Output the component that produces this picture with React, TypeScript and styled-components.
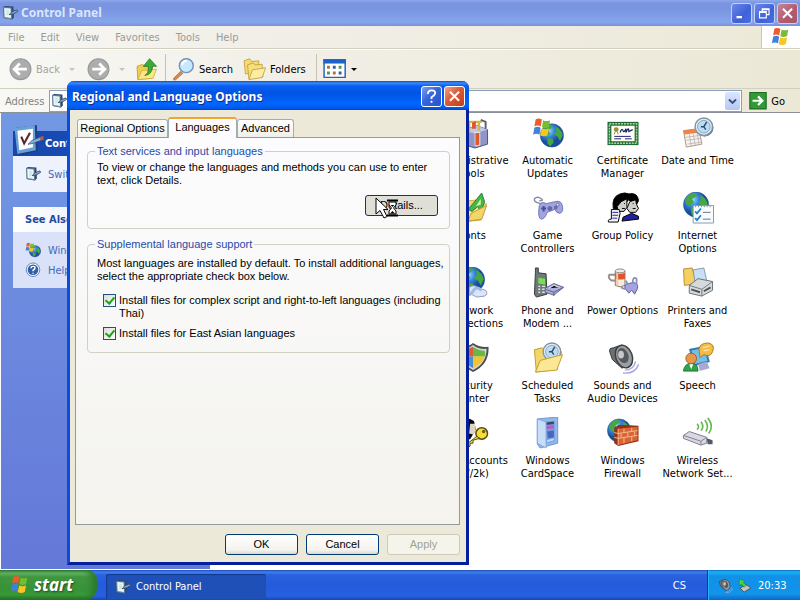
import React from 'react';
import styled, { createGlobalStyle, css } from 'styled-components';

const uiFont = '"DejaVu Sans Condensed", "DejaVu Sans", sans-serif';
const dialogFont = '"Liberation Sans", Arial, sans-serif';
const titleFont = '"Noto Sans", "Open Sans", sans-serif';

const GlobalStyle = createGlobalStyle`
  * { box-sizing: border-box; }
  body { margin: 0; overflow: hidden; }
  button, input { font: inherit; color: inherit; margin: 0; }
  button { background: none; border: 0; padding: 0; }
  svg { display: block; flex: none; }
`;

const Desktop = styled.div`
  position: relative;
  display: flex;
  flex-direction: column;
  height: 100vh;
  font: 11px/13px ${uiFont};
  color: #000;
  background: #fff;
`;

const Explorer = styled.main`
  flex: 1;
  min-height: 0;
  display: flex;
  flex-direction: column;
`;

const TitleBar = styled.header`
  display: flex;
  align-items: center;
  height: 26px;
  padding: 0 2px 0 2px;
  gap: 3px;
  background: linear-gradient(#8ea9ec 0, #7b95e0 3px, #7a94e0 9px, #809fe8 17px, #86a5ea 22px, #7890dd 26px);
`;

const WindowTitle = styled.h1`
  flex: 1;
  margin: 0;
  font: bold 12px/18px ${titleFont};
  color: #dbe5fb;
`;

const CaptionButton = styled.button<{ $kind: 'blue' | 'red' | 'activeBlue' | 'activeRed' }>`
  display: flex;
  align-items: center;
  justify-content: center;
  width: 21px;
  height: 21px;
  border: 1px solid ${p => (p.$kind.startsWith('active') ? '#fff' : '#c3d0f5')};
  border-radius: 3px;
  background: ${p =>
    ({
      blue: 'linear-gradient(135deg, #6c88e6, #3f61d8 60%, #4a70e0)',
      red: 'linear-gradient(135deg, #c58598, #b05a6c 60%, #a9566c)',
      activeBlue: 'linear-gradient(135deg, #7b9df4, #3765dc 45%, #2453d0)',
      activeRed: 'linear-gradient(135deg, #f0a48c, #dd5a38 45%, #c33c16)',
    })[p.$kind]};
`;

const CaptionGroup = styled.div`
  display: flex;
  gap: 2px;
`;

const MenuBar = styled.nav`
  display: flex;
  height: 23px;
  background: linear-gradient(90deg, #f7f7f4, #f1efe8 30%, #ece9d8);
  border-bottom: 1px solid #d2cfc0;
  color: #9b9b98;
`;

const MenuItem = styled.button`
  padding: 0 8px;
`;

const FlagBox = styled.div`
  display: flex;
  align-items: center;
  justify-content: center;
  width: 39px;
  margin-left: auto;
  background: #fff;
  border-left: 1px solid #c9c6b8;
`;

const ToolBar = styled.div`
  display: flex;
  align-items: center;
  height: 40px;
  padding-left: 9px;
  background: linear-gradient(90deg, #f8f8f5, #f1efe7 35%, #ece8d6);
  border-top: 1px solid #fff;
  border-bottom: 1px solid #d2cfc0;
`;

const ToolButton = styled.button<{ $width: number }>`
  display: flex;
  align-items: center;
  gap: 4px;
  width: ${p => p.$width}px;
  &:disabled { color: #a5a4a0; }
`;

const ToolSeparator = styled.span`
  width: 1px;
  height: 30px;
  margin-right: 6px;
  background: #c6c3b3;
`;

const DropArrow = styled.span<{ $dim?: boolean }>`
  margin-left: ${p => (p.$dim ? 5 : 0)}px;
  border: 3px solid transparent;
  border-top-color: ${p => (p.$dim ? '#c5c4bd' : '#000')};
  border-bottom: 0;
`;

const AddressBar = styled.form`
  display: flex;
  align-items: center;
  height: 23px;
  padding: 1px 15px 0 5px;
  background: linear-gradient(90deg, #f8f8f5, #f1efe7 35%, #ece8d6);
`;

const AddressLabel = styled.label`
  width: 44px;
  color: #83837f;
`;

const AddressField = styled.div`
  flex: 1;
  display: flex;
  align-items: center;
  height: 22px;
  padding: 0 1px;
  border: 1px solid #8ba0b8;
  background: #fff;
`;

const AddressInput = styled.input`
  flex: 1;
  min-width: 0;
  padding: 0 4px;
  border: 0;
  outline: 0;
  background: none;
`;

const ComboButton = styled.button`
  display: flex;
  align-items: center;
  justify-content: center;
  width: 15px;
  height: 18px;
  border-radius: 2px;
  background: linear-gradient(#dbe6fd, #b4c8f6);
`;

const GoButton = styled.button`
  display: flex;
  align-items: center;
  gap: 4px;
  margin-left: 7px;
`;

const Content = styled.div`
  flex: 1;
  min-height: 0;
  display: flex;
  padding: 0 0 1px 1px;
  border-top: 1px solid #8b8f98;
`;

const Sidebar = styled.aside`
  display: flex;
  flex-direction: column;
  flex: none;
  gap: 15px;
  width: 209px;
  padding: 18px 12px;
  background: linear-gradient(#7298e4, #6478d8);
`;

const TaskPanel = styled.section<{ $tone: string }>`
  background: ${p => p.$tone};
  color: #3c5fbc;
`;

const TaskHeading = styled.h2<{ $primary?: boolean }>`
  display: flex;
  align-items: flex-end;
  height: 25px;
  margin: 0;
  padding-left: ${p => (p.$primary ? 0 : 12)}px;
  font: bold 11px/24px ${uiFont};
  ${p =>
    p.$primary
      ? css`color: #fff; background: linear-gradient(90deg, #1446ac, #2456c2);`
      : css`color: #24489c; background: linear-gradient(90deg, #fff, #d0dbf7);`}
`;

const TaskLinks = styled.div`
  display: flex;
  flex-direction: column;
  gap: 4px;
  padding: 10px 12px;
`;

const TaskLink = styled.a`
  display: flex;
  align-items: center;
  gap: 7px;
  color: #4568bc;
  text-decoration: none;
`;

const IconGrid = styled.div`
  flex: 1;
  display: grid;
  grid-template-columns: repeat(7, 75px);
  grid-auto-rows: 75px;
  padding-top: 4px;
`;

const Applet = styled.button`
  display: flex;
  flex-direction: column;
  align-items: center;
  gap: 5px;
  &:nth-child(4n + 1) { grid-column-start: 4; }
`;

const AppletName = styled.span`
  white-space: pre;
  text-align: center;
`;

const Dialog = styled.section`
  position: absolute;
  left: 67px;
  top: 81px;
  width: 402px;
  border: 3px solid #0a33c4;
  border-color: #0a4be0 #041f9c #041f9c #0a4be0;
  border-top: 0;
  border-radius: 7px 7px 0 0;
  background: #ece9d8;
  font: 11px/13px ${dialogFont};
`;

const DialogTitleBar = styled.header`
  display: flex;
  align-items: center;
  height: 29px;
  margin: 0 -3px;
  padding: 2px 4px 0 5px;
  border-radius: 7px 7px 0 0;
  background: linear-gradient(#0a48c8 0, #3b8bf8 2px, #0a5df0 5px, #0054e4 12px, #0066ff 23px, #0058ec 27px, #0043cc 29px);
`;

const DialogTitle = styled.h2`
  flex: 1;
  margin: 0;
  font: bold 12px/18px ${titleFont};
  color: #fff;
  text-shadow: 1px 1px 0 #0c2f90;
`;

const DialogBody = styled.div`
  padding: 7px 6px 7px 5px;
`;

const Tabs = styled.div`
  display: flex;
  align-items: flex-end;
  height: 20px;
  padding-left: 2px;
`;

const Tab = styled.button<{ $width: number; $active?: boolean }>`
  width: ${p => p.$width}px;
  height: 18px;
  border: 1px solid #a3adb0;
  border-bottom: 0;
  border-radius: 3px 3px 0 0;
  background: linear-gradient(#fff, #f0f0ea);
  white-space: nowrap;
  ${p =>
    p.$active &&
    css`
      height: 21px;
      margin-bottom: -1px;
      padding-bottom: 3px;
      border-top: 2px solid #f3a62f;
      background: #fcfcfe;
      z-index: 1;
    `}
`;

const TabPage = styled.div`
  min-height: 388px;
  padding: 7px 9px 0 11px;
  border: 1px solid #919b9c;
  background: linear-gradient(#fcfcfe, #f4f3ee);
`;

const Group = styled.fieldset`
  min-width: 0;
  margin: 0 0 9px;
  padding: 3px 9px 12px 9px;
  border: 1px solid #d0d0c4;
  border-radius: 4px;
`;

const GroupTitle = styled.legend`
  margin-left: -2px;
  padding: 0 2px;
  color: #1f4ba8;
`;

const Paragraph = styled.p`
  margin: 0;
  white-space: pre;
`;

const LanguageNote = styled(Paragraph)`
  padding: 3px 0 11px;
`;

const CheckRow = styled.label`
  display: flex;
  align-items: flex-start;
  gap: 3px;
  margin: 0 0 7px 6px;
  white-space: pre;
  &:last-child { margin-bottom: 0; }
`;

const CheckBox = styled.input`
  appearance: none;
  flex: none;
  display: flex;
  align-items: center;
  justify-content: center;
  width: 13px;
  height: 13px;
  border: 1px solid #1c5180;
  background: linear-gradient(135deg, #dcdcd7, #fff);
  &:checked::after {
    content: '';
    width: 4px;
    height: 7px;
    margin-bottom: 2px;
    border: solid #21a121;
    border-width: 0 2px 2px 0;
    transform: rotate(40deg);
  }
`;

const ButtonRow = styled.div<{ $gap?: number }>`
  display: flex;
  justify-content: flex-end;
  gap: 8px;
  margin-top: ${p => p.$gap ?? 9}px;
`;

const PushButton = styled.button<{ $pressed?: boolean }>`
  width: 73px;
  height: 21px;
  border: 1px solid #003c74;
  border-radius: 3px;
  background: ${p => (p.$pressed ? '#e0dfd7' : 'linear-gradient(#fff, #f3f2ed 80%, #dcd8cf)')};
  &:disabled {
    color: #a1a192;
    border-color: #cdcabc;
    background: #f5f4ea;
  }
`;

const DetailsRow = styled(ButtonRow)`
  padding-right: 2px;
`;

const BusyPointer = styled.div`
  position: absolute;
  left: 305px;
  top: 116px;
  pointer-events: none;
`;

const TaskBar = styled.footer`
  display: flex;
  align-items: stretch;
  height: 30px;
  background: linear-gradient(#1f49b4 0, #3f7ff0 2px, #2a62dc 5px, #245bdb 14px, #2660e2 26px, #1b46ae 30px);
  color: #fff;
`;

const StartButton = styled.button`
  display: flex;
  align-items: center;
  gap: 4px;
  width: 97px;
  padding: 0 0 1px 10px;
  border-radius: 0 10px 12px 0;
  background: linear-gradient(#2f7a30 0, #6cb96a 3px, #3f963f 7px, #389238 20px, #3a9a3a 25px, #246a25 30px);
  box-shadow: inset -5px 0 6px #2a7a2b;
  font: italic bold 17px/20px ${titleFont};
  color: #fff;
  text-shadow: 1px 1px 2px #1d4b1d;
`;

const TaskButton = styled.button`
  display: flex;
  align-items: center;
  gap: 5px;
  width: 160px;
  margin: 4px 0 1px 9px;
  padding-left: 9px;
  border-radius: 2px;
  background: #1e50b8;
  box-shadow: inset 1px 1px 1px #143a8e;
`;

const LanguageIndicator = styled.button`
  margin-left: auto;
  padding: 0 21px 0 0;
`;

const Tray = styled.div`
  display: flex;
  align-items: center;
  gap: 4px;
  width: 93px;
  padding-left: 10px;
  border-left: 1px solid #0a3a98;
  background: linear-gradient(#0f70cc 0, #1cb0f4 2px, #1290e6 6px, #1194ea 24px, #0d68c8 30px);
  box-shadow: inset 1px 0 0 #22b6f6;
`;

const Clock = styled.time`
  margin-left: 2px;
`;

type ArtProps = { name: string; size?: number };

const Flag = () => (
  <g>
    <path d="M5 3Q9 0 15 3L13 14Q8 11 3 14Z" fill="#ed5a2c" />
    <path d="M17 4Q22 7 28 4L26 15Q20 18 15 15Z" fill="#75bd35" />
    <path d="M3 16Q8 13 13 16L11 27Q6 24 1 27Z" fill="#3e82dc" />
    <path d="M15 17Q20 20 26 17L24 28Q18 31 12 28Z" fill="#f9c522" />
  </g>
);

const Globe = ({ x = 16, y = 16, r = 13 }) => (
  <g>
    <circle cx={x} cy={y} r={r} fill="url(#sea)" stroke="#23558d" strokeWidth=".6" />
    <g transform={`translate(${x} ${y}) scale(${r / 13})`} fill="#47a843">
      <path d="M-11-5Q-7-12-1-12L1-9-4-6-2-2-7 2-10-1ZM-5 3L1 4 2 8-2 12-5 9Z" />
      <path d="M4-10Q11-7 12 0L9 6 6 1 2-1 5-5Z" />
    </g>
  </g>
);

const PanelSheet = () => (
  <g>
    <path d="M2 4L24 1 25 28 5 32Z" fill="#173f7c" />
    <path d="M1 4L22 1 23 27 4 31Z" fill="#6ba0d6" />
    <path d="M4 7L20 5 20 24 6 27Z" fill="#fff" />
    <path d="M8 13L11 20 17 9" stroke="#5d2530" strokeWidth="2.200" fill="none" />
    <path d="M15 21L19 17 29 13 31 16 20 20Z" fill="#7fb0df" stroke="#2a446b" strokeWidth=".7" />
    <path d="M27 14L31 12V16L28 17Z" fill="#c8543d" />
  </g>
);

const PanelSmall = () => (
  <g>
    <path d="M2 4L6 2 23 3 24 26 20 30 3 27Z" fill="#2c4a72" />
    <path d="M2 4L19 5 20 30 3 27Z" fill="#6687aa" />
    <path d="M4 6L17 7 18 27 5 25Z" fill="#eef7f4" />
    <path d="M8 10L14 10 14 20 8 22Z" fill="#cfeae6" />
    <path d="M14 20L20 14 30 10 32 13 24 18Z" fill="#87a5c6" stroke="#263c5a" strokeWidth="1.500" />
  </g>
);

const Gamepad = () => (
  <g stroke="#5960a2" strokeWidth=".8">
    <path d="M9 12Q1 11 2 7Q5 4 9 7Q12 9 7 9" fill="none" stroke="#8989a8" strokeWidth="1.5" />
    <path d="M7 14Q9 9 14 12L23 10Q30 8 31 15Q32 21 28 22Q25 22 23 18L15 21Q13 28 9 28Q5 27 7 14Z" fill="#a2a4e1" />
    <path d="M9 17H14M11.500 14.500V20" stroke="#484e94" strokeWidth="2" />
    <circle cx="26" cy="13" r="1.500" fill="#dedff9" />
    <circle cx="24" cy="16" r="1.500" fill="#696fb7" />
    <circle cx="18" cy="17" r="2" fill="#6369a8" />
  </g>
);

const ClockFace = ({ x = 20, y = 10, r = 9 }) => (
  <g>
    <circle cx={x + 1} cy={y + 1} r={r} fill="#57616b" />
    <circle cx={x} cy={y} r={r} fill="#e4edf4" stroke="#8494a4" strokeWidth="1.5" />
    <circle cx={x} cy={y} r={r - 2.5} fill="#bcdcf3" stroke="#6b9dc4" strokeWidth=".8" />
    <path d={`M${x + 3} ${y - 5}L${x} ${y}H${x - 3}M${x} ${y}L${x + 2} ${y + 3}`} stroke="#314863" strokeWidth="1.4" fill="none" />
  </g>
);

const FolderShape = () => (
  <g stroke="#c59a31" strokeWidth=".8">
    <path d="M2 8L10 6 13 9 23 8 26 28 4 31Z" fill="#f3d66a" />
    <path d="M8 18L31 12 25 29 3 31Z" fill="#fbe895" />
  </g>
);

const Speaker = () => (
  <g>
    <path d="M2 9Q2 6 6 6L15 3 24 22 15 27 5 18Z" fill="#6d7074" stroke="#34373a" />
    <ellipse cx="17" cy="15" rx="8.500" ry="12" transform="rotate(-20 17 15)" fill="#9b9ea1" stroke="#3c3f42" strokeWidth="1.5" />
    <ellipse cx="16" cy="14" rx="5.500" ry="8" transform="rotate(-20 16 14)" fill="#555a5f" />
    <ellipse cx="14" cy="13" rx="3" ry="4" fill="#c6c8ca" />
    <path d="M18 29Q27 29 29 20M16 32Q29 33 32 23" stroke="#aaa9dd" fill="none" strokeWidth="1.5" />
  </g>
);

const art: Record<string, React.ReactNode> = {
  flag: <Flag />,
  panel: <PanelSheet />,
  panelSmall: <PanelSmall />,
  tools: (
    <g>
      <path d="M5 14L20 9 31 13V28L18 32 5 28Z" fill="#8f96c5" stroke="#4d5486" />
      <path d="M5 14L18 17 31 13 20 9Z" fill="#c3c7e6" />
      <path d="M18 17V32" stroke="#5b6298" />
      <path d="M10 5H25M12 5V15M22 4V14" stroke="#d7b344" strokeWidth="2.500" />
      <path d="M15 6L19 4V12H15Z" fill="#dd5536" />
      <path d="M18 16H23V29L18 30Z" fill="#db5830" stroke="#fff" strokeWidth=".8" />
      <path d="M24 3L29 5V12" stroke="#5a5f72" strokeWidth="2" fill="none" />
    </g>
  ),
  updates: (
    <g>
      <Globe x={20} y={19} r={12} />
      <g transform="scale(.65) translate(0 1)"><Flag /></g>
    </g>
  ),
  certificate: (
    <g>
      <path d="M0 5H32V29H0Z" fill="#226b36" />
      <path d="M2 7H30V27H2Z" fill="none" stroke="#a7dca0" strokeWidth="1.500" strokeDasharray="2 1" />
      <path d="M4 9H28V25H4Z" fill="#fffff4" />
      <circle cx="9" cy="13" r="2.500" fill="#9b8d40" />
      <path d="M8 15L7 18M10 15L11 18" stroke="#9b8d40" />
      <path d="M13 16Q15 11 16 14Q17 17 19 12L19 16Q22 9 22 15L26 13" stroke="#171c67" fill="none" strokeWidth="1.200" />
      <path d="M7 20H24M7 22.500H14M18 22.500H25" stroke="#1a1f75" />
    </g>
  ),
  date: (
    <g>
      <path d="M1 14L17 12 20 28 4 31Z" fill="#fbf4ed" stroke="#a5968f" />
      <path d="M1 14L17 12 18 16 2 18Z" fill="#ef8344" />
      <path d="M3 21L18 19M4 24L19 22M5 28L19 26M7 17L9 30M11 17L13 29M15 16L17 28" stroke="#b9adb0" strokeWidth=".8" />
      <ClockFace x={22} y={10} r={9} />
    </g>
  ),
  fonts: (
    <g transform="translate(-1 0)">
      <FolderShape />
      <path d="M12 18L26 1 29 10 25 21 22 15 16 20Z" fill="#45b649" stroke="#2b8134" />
      <path d="M20 15L25 7 25 13Z" fill="#d8f0a4" />
      <path d="M15 22L31 14 26 28 12 30Z" fill="#f3d66a" stroke="#c59a31" />
    </g>
  ),
  game: <Gamepad />,
  group: (
    <g stroke="#000">
      <path d="M6 17Q4 5 13 2Q18 0 22 2Q31 0 32 9L29 15 22 8 13 17Z" fill="#000" />
      <path d="M14 10L20 7 20 16 17 20 11 20 10 15Z" fill="#cfcfcb" />
      <path d="M23 10L29 8 30 13 32 17 29 21 23 21 20 17Z" fill="#cfcfcb" />
      <path d="M16 26L25 22 32 25V28L15 30Z" fill="#20209c" />
      <path d="M4 18H12L13 22 11 31H1Q0 28 4 28Z" fill="#f1f1f3" />
      <path d="M5 21H11M5 24H11M5 27H10" stroke="#272790" />
      <path d="M17 12H18M26 12H27M15 17H18M26 17H29" />
    </g>
  ),
  internet: (
    <g>
      <Globe x={14} y={13} r={13} />
      <path d="M11 14H32V32H11Z" fill="#f9fbff" stroke="#809cb1" />
      <path d="M13 15H31" stroke="#8294a1" strokeWidth="1.500" strokeDasharray="1 2" />
      <path d="M13 20L15 22 19 17M13 27L15 29 19 24" stroke="#227ec4" strokeWidth="1.800" fill="none" />
      <path d="M21 21H29M21 28H29" stroke="#6b7481" />
    </g>
  ),
  network: (
    <g>
      <Globe x={15} y={13} r={13} />
      <path d="M12 21Q18 17 22 22L29 24Q32 28 28 30L20 31 12 27Z" fill="#dbe4f8" stroke="#8c9cba" />
      <path d="M3 28Q13 31 16 25Q19 19 25 24" stroke="#9cbbe6" strokeWidth="3" fill="none" />
    </g>
  ),
  phone: (
    <g>
      <path d="M3 6V1H6V6L14 7 15 28 4 31 2 28Z" fill="#70787a" stroke="#333c40" />
      <path d="M6 11L13 12V18L6 17Z" fill="#78e04d" />
      <path d="M6 20H8M10 20H13M6 23H8M10 23H13M6 26H8M10 26H13" stroke="#e4e8e9" strokeWidth="1.500" />
      <path d="M13 22L22 17 32 21 22 29 13 26Z" fill="#aeafd9" stroke="#5f608e" />
      <path d="M13 23L22 26 32 21M22 26V30" stroke="#5f608e" fill="none" />
      <path d="M17 22L22 19 28 21" stroke="#e7e8fa" />
    </g>
  ),
  power: (
    <g>
      <path d="M10 14L4 14Q0 11 2 8L9 8" stroke="#91918d" strokeWidth="2" fill="none" />
      <path d="M8 4Q13 1 18 4V19Q13 22 8 19Z" fill="#f8ebe4" stroke="#84736c" />
      <path d="M8 6Q13 8 18 6V12Q13 14 8 12Z" fill="#de552d" />
      <path d="M10 6V19" stroke="#f6c79e" strokeWidth="2" />
      <ellipse cx="13" cy="4" rx="5" ry="2" fill="#eee" stroke="#918c87" />
      <path d="M18 22Q17 17 22 17L27 16Q32 17 31 22L28 28 25 24 22 27Z" fill="#a4a3df" stroke="#5e5e9c" />
      <path d="M18 23L14 21M21 18L19 14M26 17Q26 9 30 12L30 18" stroke="#8c8cb5" strokeWidth="1.800" fill="none" />
    </g>
  ),
  printer: (
    <g>
      <path d="M1 2L10 1 14 17 2 19Z" fill="#f5cf63" stroke="#b78f34" />
      <path d="M11 3L22 1 25 14 13 16Z" fill="#c8dff7" stroke="#879ab3" />
      <path d="M7 19L16 12 31 15V24L20 30 7 27Z" fill="#d6dadd" stroke="#6b7074" />
      <path d="M7 19L20 23 31 15M20 23V30" stroke="#72787c" fill="none" />
      <path d="M9 23L18 26M22 25L29 21" stroke="#4e5456" strokeWidth="2" />
    </g>
  ),
  security: (
    <g transform="translate(2 0)">
      <path d="M14 1Q21 6 30 5Q31 23 14 31Q-2 23 0 5Q8 6 14 1Z" fill="#4c5054" />
      <path d="M14 3Q20 8 28 7Q28 22 14 29Q1 22 2 7Q8 8 14 3Z" fill="#d5d9dc" />
      <path d="M14 5V15H4Q3 12 4 8Q9 8 14 5Z" fill="#e05b33" />
      <path d="M14 5Q20 9 26 9Q27 12 26 15H14Z" fill="#68b741" />
      <path d="M4 15H14V27Q5 22 4 15Z" fill="#4b8edb" />
      <path d="M14 15H26Q24 22 14 27Z" fill="#f0c52f" />
    </g>
  ),
  scheduled: (
    <g>
      <path d="M2 8L10 6 13 9 23 8 26 28 4 31Z" fill="#f3d66a" stroke="#c59a31" />
      <ClockFace x={20} y={10} r={9} />
      <path d="M8 19L31 13 25 29 3 31Z" fill="#fbe895" stroke="#c59a31" />
    </g>
  ),
  sounds: <Speaker />,
  speech: (
    <g>
      <path d="M8 8L23 5 27 20 12 24Z" fill="#75bee9" stroke="#397aae" strokeWidth="2" />
      <path d="M16 23L25 20 28 27 18 30Z" fill="#a9a9cf" />
      <path d="M17 7Q18 1 27 1Q34 3 31 10Q29 16 22 13L18 16Z" fill="#f5bd45" stroke="#a97b22" />
      <path d="M21 6L28 4M22 9L28 8" stroke="#fff1bc" />
      <path d="M1 30Q2 22 9 22Q16 22 16 30Z" fill="#31a34a" stroke="#247539" />
      <circle cx="9" cy="17" r="5.500" fill="#e89846" stroke="#9d602c" />
      <path d="M7 23L9 28 11 23Z" fill="#fff" />
    </g>
  ),
  users: (
    <g>
      <path d="M1 5Q8-2 17 4L19 13 13 23H1Z" fill="#050505" />
      <path d="M13 7H18L19 14 16 18 12 17Z" fill="#ddd5be" />
      <circle cx="25" cy="17" r="6" fill="#f5dd38" stroke="#554a0a" strokeWidth="1.500" />
      <path d="M20 20L8 29 10 32 13 30V27H16V24L23 22Z" fill="#f5dd38" stroke="#554a0a" />
      <circle cx="27" cy="15" r="1.800" fill="#6e610c" />
    </g>
  ),
  cardspace: (
    <g>
      <path d="M5 2L26 0V27L8 32 5 28Z" fill="#91b8e9" stroke="#6f96d1" />
      <path d="M11 5L23 4V25L11 28Z" fill="#7a9be0" />
      <path d="M14 7L22 6" stroke="#3d4a68" strokeWidth="2.500" />
      <path d="M14 11L22 10" stroke="#b75ac5" strokeWidth="3" />
      <path d="M15 15L22 14V21L16 22Z" fill="#4767bd" />
      <path d="M15 25L22 23" stroke="#b9dff8" strokeWidth="2" />
      <path d="M5 2L14 5V32L5 27Z" fill="#c8ddf8" stroke="#83a9df" />
    </g>
  ),
  firewall: (
    <g>
      <Globe x={12} y={14} r={12} />
      <path d="M7 11L12 8 32 9V25L11 30 7 27Z" fill="#913119" />
      <path d="M11 12L31 10V24L11 29Z" fill="#dc6335" />
      <path d="M7 16L11 17 31 14M7 21L11 22 31 19M11 12V29M17 12V16M25 11V15M14 17V21M21 16V20M28 15V19M17 21V27M25 20V25" stroke="#f5bd8f" strokeWidth="1" fill="none" />
    </g>
  ),
  wireless: (
    <g>
      <path d="M1 19L7 15 25 21V27L19 29 1 22Z" fill="#d8d7e2" stroke="#7d7c8e" />
      <path d="M1 19L19 25 25 21M19 25V29" fill="none" stroke="#838291" />
      <path d="M25 22L31 24V28L26 28Z" fill="#545867" />
      <path d="M15 7Q18 10 15 13M19 5Q23 10 19 14M23 3Q28 9 24 15M26 1Q33 9 27 17" stroke="#63b64b" strokeWidth="1.600" fill="none" />
    </g>
  ),
  help: (
    <g>
      <circle cx="16" cy="16" r="14" fill="#f4f7ff" stroke="#6984b5" strokeWidth="2" />
      <circle cx="16" cy="16" r="11" fill="#2e5fa8" />
      <path d="M12 13Q12 9 16 9Q21 9 20 13Q19 15 16 17V19M16 22V24" stroke="#fff" strokeWidth="3" fill="none" />
    </g>
  ),
  left: (
    <g>
      <circle cx="16" cy="16" r="15" fill="#adadad" stroke="#979797" strokeWidth="1.500" />
      <path d="M25 16H8M15 8L7 16 15 24" stroke="#fff" strokeWidth="4" fill="none" />
    </g>
  ),
  right: (
    <g>
      <circle cx="16" cy="16" r="15" fill="#adadad" stroke="#979797" strokeWidth="1.500" />
      <path d="M7 16H24M17 8L25 16 17 24" stroke="#fff" strokeWidth="4" fill="none" />
    </g>
  ),
  up: (
    <g>
      <path d="M1 12L9 9 12 12 23 11V29L2 31Z" fill="#f0cd4c" stroke="#b79027" />
      <path d="M2 31L8 18 29 16 24 29Z" fill="#fbe783" stroke="#c8a33b" />
      <path d="M12 25Q18 23 17 12H10L19 1 29 12H23Q23 24 12 25Z" fill="#39ad38" stroke="#19711e" />
    </g>
  ),
  search: (
    <g>
      <path d="M12 19L2 29Q1 33 5 31L15 22Z" fill="#d98a4d" stroke="#9c6036" />
      <circle cx="20" cy="11" r="10" fill="#c5eafc" stroke="#7190bb" strokeWidth="2" />
      <path d="M14 10Q15 4 21 4" stroke="#fff" strokeWidth="3" fill="none" />
    </g>
  ),
  folders: (
    <g stroke="#b78e2c">
      <path d="M1 4L9 1 12 5 22 4 23 20 3 23Z" fill="#f6da70" />
      <path d="M6 10L14 7 17 10 27 9 28 27 8 30Z" fill="#f7df7d" />
      <path d="M8 31L13 17 32 14 27 28Z" fill="#fdeda2" />
    </g>
  ),
  views: (
    <g>
      <path d="M1 4H30V28H1Z" fill="#fff" stroke="#2363bb" strokeWidth="2" />
      <path d="M0 3H31V9H0Z" fill="#1c62ca" />
      <path d="M5 12H9V16H5ZM13 20H17V24H13Z" fill="#b4703f" />
      <path d="M13 12H17V16H13ZM21 20H25V24H21Z" fill="#365faa" />
      <path d="M21 12H25V16H21ZM5 20H9V24H5Z" fill="#4b9a58" />
    </g>
  ),
  go: (
    <g>
      <path d="M1 1H31V31H1Z" fill="#319a35" stroke="#196b20" strokeWidth="2" />
      <path d="M6 16H24M16 8L24 16 16 24" stroke="#fff" strokeWidth="4" fill="none" />
    </g>
  ),
  safelyRemove: (
    <g>
      <path d="M6 22L21 15 30 22 15 31Z" fill="#c1c5c7" stroke="#4b5255" strokeWidth="2" />
      <path d="M5 2L17 7 13 10 20 16 16 20 9 13 4 17Z" fill="#51d444" stroke="#157b1a" />
    </g>
  ),
  speaker: <Speaker />,
  minimize: <path d="M5 22H17V27H5Z" fill="#fff" />,
  restore: <path d="M11 11V6H26V19H21M5 12H20V26H5ZM5 14H20M11 8H26" stroke="#fff" strokeWidth="2.500" fill="none" />,
  close: <path d="M6 6L26 26M26 6L6 26" stroke="#fff" strokeWidth="4.500" />,
  question: <path d="M8 11Q8 3 16 3Q25 3 24 10Q23 14 16 18V22M16 26V30" stroke="#fff" strokeWidth="4" fill="none" />,
  chevron: <path d="M3 9L16 22 29 9" stroke="#3d5178" strokeWidth="7" fill="none" />,
};

const Art = ({ name, size = 32 }: ArtProps) => (
  <svg width={size} height={size} viewBox="0 0 32 33" aria-hidden="true">
    <defs>
      <radialGradient id="sea" cx=".35" cy=".3">
        <stop stopColor="#a9dfff" />
        <stop offset=".5" stopColor="#398be0" />
        <stop offset="1" stopColor="#1b4d9c" />
      </radialGradient>
    </defs>
    {art[name]}
  </svg>
);

const HeadingArt = styled.span`
  align-self: flex-end;
  width: 32px;
`;

const applets = [
  ['tools', 'Administrative\nTools'],
  ['updates', 'Automatic\nUpdates'],
  ['certificate', 'Certificate\nManager'],
  ['date', 'Date and Time'],
  ['fonts', 'Fonts'],
  ['game', 'Game\nControllers'],
  ['group', 'Group Policy'],
  ['internet', 'Internet\nOptions'],
  ['network', 'Network\nConnections'],
  ['phone', 'Phone and\nModem ...'],
  ['power', 'Power Options'],
  ['printer', 'Printers and\nFaxes'],
  ['security', 'Security\nCenter'],
  ['scheduled', 'Scheduled\nTasks'],
  ['sounds', 'Sounds and\nAudio Devices'],
  ['speech', 'Speech'],
  ['users', 'User Accounts\n(W/2k)'],
  ['cardspace', 'Windows\nCardSpace'],
  ['firewall', 'Windows\nFirewall'],
  ['wireless', 'Wireless\nNetwork Set...'],
];

const menus = ['File', 'Edit', 'View', 'Favorites', 'Tools', 'Help'];

const ControlPanelWindow = () => (
  <Explorer>
    <TitleBar>
      <Art name="panelSmall" size={16} />
      <WindowTitle>Control Panel</WindowTitle>
      <CaptionGroup>
        <CaptionButton $kind="blue" aria-label="Minimize"><Art name="minimize" size={15} /></CaptionButton>
        <CaptionButton $kind="blue" aria-label="Restore"><Art name="restore" size={15} /></CaptionButton>
        <CaptionButton $kind="red" aria-label="Close"><Art name="close" size={15} /></CaptionButton>
      </CaptionGroup>
    </TitleBar>
    <MenuBar>
      {menus.map(menu => <MenuItem key={menu}>{menu}</MenuItem>)}
      <FlagBox><Art name="flag" size={20} /></FlagBox>
    </MenuBar>
    <ToolBar>
      <ToolButton $width={78} disabled><Art name="left" size={23} />Back<DropArrow $dim /></ToolButton>
      <ToolButton $width={49} disabled aria-label="Forward"><Art name="right" size={23} /><DropArrow $dim /></ToolButton>
      <ToolButton $width={29} aria-label="Up"><Art name="up" size={23} /></ToolButton>
      <ToolSeparator />
      <ToolButton $width={71}><Art name="search" size={23} />Search</ToolButton>
      <ToolButton $width={73}><Art name="folders" size={23} />Folders</ToolButton>
      <ToolSeparator />
      <ToolButton $width={34} aria-label="Views"><Art name="views" size={24} /><DropArrow /></ToolButton>
    </ToolBar>
    <AddressBar onSubmit={e => e.preventDefault()}>
      <AddressLabel htmlFor="address">Address</AddressLabel>
      <AddressField>
        <Art name="panelSmall" size={16} />
        <AddressInput id="address" />
        <ComboButton type="button" aria-label="Show addresses"><Art name="chevron" size={9} /></ComboButton>
      </AddressField>
      <GoButton type="submit"><Art name="go" size={18} />Go</GoButton>
    </AddressBar>
    <Content>
      <Sidebar>
        <TaskPanel $tone="#edf2fd">
          <TaskHeading $primary><HeadingArt><Art name="panel" size={32} /></HeadingArt>Control Panel</TaskHeading>
          <TaskLinks>
            <TaskLink href="#category"><Art name="panelSmall" size={16} />Switch to Category View</TaskLink>
          </TaskLinks>
        </TaskPanel>
        <TaskPanel $tone="#d9e2f8">
          <TaskHeading>See Also</TaskHeading>
          <TaskLinks>
            <TaskLink href="#update"><Art name="updates" size={16} />Windows Update</TaskLink>
            <TaskLink href="#help"><Art name="help" size={16} />Help and Support</TaskLink>
          </TaskLinks>
        </TaskPanel>
      </Sidebar>
      <IconGrid>
        {applets.map(([icon, label]) => (
          <Applet key={label}><Art name={icon} /><AppletName>{label}</AppletName></Applet>
        ))}
      </IconGrid>
    </Content>
  </Explorer>
);

const LanguageDialog = () => (
  <Dialog role="dialog" aria-label="Regional and Language Options">
    <DialogTitleBar>
      <DialogTitle>Regional and Language Options</DialogTitle>
      <CaptionGroup>
        <CaptionButton $kind="activeBlue" aria-label="Help"><Art name="question" size={15} /></CaptionButton>
        <CaptionButton $kind="activeRed" aria-label="Close"><Art name="close" size={15} /></CaptionButton>
      </CaptionGroup>
    </DialogTitleBar>
    <DialogBody>
      <Tabs role="tablist">
        <Tab role="tab" $width={91}>Regional Options</Tab>
        <Tab role="tab" $width={69} $active aria-selected>Languages</Tab>
        <Tab role="tab" $width={57}>Advanced</Tab>
      </Tabs>
      <TabPage role="tabpanel">
        <Group>
          <GroupTitle>Text services and input languages</GroupTitle>
          <Paragraph>{'To view or change the languages and methods you can use to enter\ntext, click Details.'}</Paragraph>
          <DetailsRow $gap={8}><PushButton $pressed>Details...</PushButton></DetailsRow>
        </Group>
        <Group>
          <GroupTitle>Supplemental language support</GroupTitle>
          <LanguageNote>{'Most languages are installed by default. To install additional languages,\nselect the appropriate check box below.'}</LanguageNote>
          <CheckRow><CheckBox type="checkbox" defaultChecked />{'Install files for complex script and right-to-left languages (including\nThai)'}</CheckRow>
          <CheckRow><CheckBox type="checkbox" defaultChecked />Install files for East Asian languages</CheckRow>
        </Group>
      </TabPage>
      <ButtonRow>
        <PushButton>OK</PushButton>
        <PushButton>Cancel</PushButton>
        <PushButton disabled>Apply</PushButton>
      </ButtonRow>
    </DialogBody>
    <BusyPointer>
      <svg width="24" height="23" viewBox="0 0 24 23" aria-hidden="true">
        <path d="M1 1V17L5 13.500 9 21 12 19.500 8.500 12.500H13Z" fill="#fff" stroke="#000" />
        <path d="M12 3.500H23M12 18.500H23" stroke="#000" strokeWidth="2" />
        <path d="M14 5H21V8L18.500 11 21 14V17H14V14L16.500 11 14 8Z" fill="#fff" stroke="#000" />
        <path d="M15.500 8H19.500L17.500 10ZM15 16.500L17.500 14 20 16.500Z" fill="#000" />
      </svg>
    </BusyPointer>
  </Dialog>
);

export default function App() {
  return (
    <Desktop>
      <GlobalStyle />
      <ControlPanelWindow />
      <LanguageDialog />
      <TaskBar>
        <StartButton><Art name="flag" size={20} />start</StartButton>
        <TaskButton><Art name="panelSmall" size={16} />Control Panel</TaskButton>
        <LanguageIndicator>CS</LanguageIndicator>
        <Tray>
          <Art name="speaker" size={15} />
          <Art name="safelyRemove" size={15} />
          <Clock>20:33</Clock>
        </Tray>
      </TaskBar>
    </Desktop>
  );
}
